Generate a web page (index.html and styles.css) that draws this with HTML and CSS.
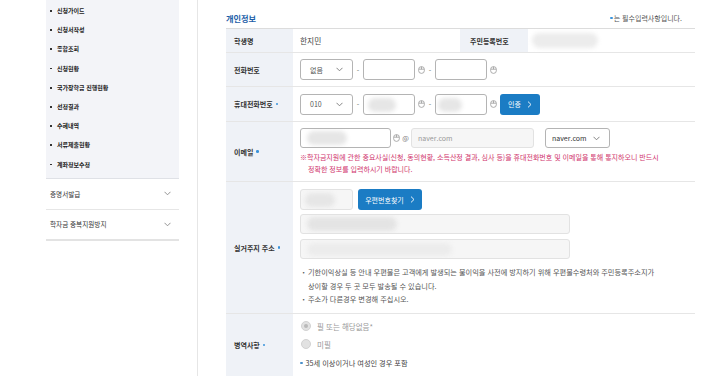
FILE: index.html
```html
<!DOCTYPE html>
<html lang="ko">
<head>
<meta charset="utf-8">
<title>개인정보</title>
<link rel="stylesheet" href="styles.css">
</head>
<body>
<div class="page">
  <aside class="side">
    <div class="side-panel">
      <ul class="sub-menu">
        <li>신청가이드</li>
        <li>신청서작성</li>
        <li>종합조회</li>
        <li>신청현황</li>
        <li>국가장학금 진행현황</li>
        <li>선정결과</li>
        <li>수혜내역</li>
        <li>서류제출현황</li>
        <li>계좌정보수정</li>
      </ul>
    </div>
    <div class="acc">증명서발급<svg class="acc-chev" width="7" height="5" viewBox="0 0 7 5"><polyline points="0.5,0.8 3.5,3.8 6.5,0.8" fill="none" stroke="#888" stroke-width="0.9"/></svg></div>
    <div class="acc acc-last">학자금 중복지원방지<svg class="acc-chev" width="7" height="5" viewBox="0 0 7 5"><polyline points="0.5,0.8 3.5,3.8 6.5,0.8" fill="none" stroke="#888" stroke-width="0.9"/></svg></div>
  </aside>

  <main class="main">
    <div class="title-row">
      <h2 class="title">개인정보</h2>
      <p class="req-note"><span class="req-dot"></span>는 필수입력사항입니다.</p>
    </div>

    <div class="form-table">
      <div class="row row-name">
        <div class="th">학생명</div>
        <div class="td td-text">한지민</div>
        <div class="th th-second">주민등록번호</div>
        <div class="td"><span class="blob blob-rrn"></span></div>
      </div>

      <div class="row row-tel">
        <div class="th">전화번호</div>
        <div class="td td-line">
          <div class="field select sel-sm"><span>없음</span><svg width="7" height="5" viewBox="0 0 7 5"><polyline points="0.5,0.8 3.5,3.8 6.5,0.8" fill="none" stroke="#777" stroke-width="0.9"/></svg></div>
          <span class="dash">-</span>
          <div class="field in-tel"></div>
          <svg class="ico-lock" width="7" height="8" viewBox="0 0 7 8"><rect x="0.6" y="0.6" width="5.8" height="6.8" rx="2.9" fill="none" stroke="#999" stroke-width="0.8"/><line x1="0.8" y1="3.2" x2="6.2" y2="3.2" stroke="#999" stroke-width="0.8"/><line x1="3.5" y1="0.8" x2="3.5" y2="3.2" stroke="#999" stroke-width="0.8"/></svg>
          <span class="dash">-</span>
          <div class="field in-tel"></div>
          <svg class="ico-lock" width="7" height="8" viewBox="0 0 7 8"><rect x="0.6" y="0.6" width="5.8" height="6.8" rx="2.9" fill="none" stroke="#999" stroke-width="0.8"/><line x1="0.8" y1="3.2" x2="6.2" y2="3.2" stroke="#999" stroke-width="0.8"/><line x1="3.5" y1="0.8" x2="3.5" y2="3.2" stroke="#999" stroke-width="0.8"/></svg>
        </div>
      </div>

      <div class="row row-mobile">
        <div class="th">휴대전화번호<span class="req-dot req-after"></span></div>
        <div class="td td-line">
          <div class="field select sel-sm"><span>010</span><svg width="7" height="5" viewBox="0 0 7 5"><polyline points="0.5,0.8 3.5,3.8 6.5,0.8" fill="none" stroke="#777" stroke-width="0.9"/></svg></div>
          <span class="dash">-</span>
          <div class="field in-tel"><span class="blob blob-tel1"></span></div>
          <svg class="ico-lock" width="7" height="8" viewBox="0 0 7 8"><rect x="0.6" y="0.6" width="5.8" height="6.8" rx="2.9" fill="none" stroke="#999" stroke-width="0.8"/><line x1="0.8" y1="3.2" x2="6.2" y2="3.2" stroke="#999" stroke-width="0.8"/><line x1="3.5" y1="0.8" x2="3.5" y2="3.2" stroke="#999" stroke-width="0.8"/></svg>
          <span class="dash">-</span>
          <div class="field in-tel"><span class="blob blob-tel2"></span></div>
          <svg class="ico-lock" width="7" height="8" viewBox="0 0 7 8"><rect x="0.6" y="0.6" width="5.8" height="6.8" rx="2.9" fill="none" stroke="#999" stroke-width="0.8"/><line x1="0.8" y1="3.2" x2="6.2" y2="3.2" stroke="#999" stroke-width="0.8"/><line x1="3.5" y1="0.8" x2="3.5" y2="3.2" stroke="#999" stroke-width="0.8"/></svg>
          <button class="btn btn-auth">인증<svg width="5" height="7" viewBox="0 0 5 7"><polyline points="1,0.6 4,3.5 1,6.4" fill="none" stroke="#fff" stroke-width="0.9"/></svg></button>
        </div>
      </div>

      <div class="row row-email">
        <div class="th">이메일<span class="req-dot req-after"></span></div>
        <div class="td td-col">
          <div class="line">
            <div class="field in-mail"><span class="blob blob-mail"></span></div>
            <svg class="ico-lock ico-mail" width="7" height="8" viewBox="0 0 7 8"><rect x="0.6" y="0.6" width="5.8" height="6.8" rx="2.9" fill="none" stroke="#999" stroke-width="0.8"/><line x1="0.8" y1="3.2" x2="6.2" y2="3.2" stroke="#999" stroke-width="0.8"/><line x1="3.5" y1="0.8" x2="3.5" y2="3.2" stroke="#999" stroke-width="0.8"/></svg>
            <span class="at">@</span>
            <div class="field field-disabled in-domain">naver.com</div>
            <div class="field select sel-domain"><span>naver.com</span><svg width="7" height="5" viewBox="0 0 7 5"><polyline points="0.5,0.8 3.5,3.8 6.5,0.8" fill="none" stroke="#777" stroke-width="0.9"/></svg></div>
          </div>
          <p class="warn">※학자금지원에 관한 중요사실(신청, 동의현황, 소득산정 결과, 심사 등)을 휴대전화번호 및 이메일을 통해 통지하오니 반드시<br><span class="warn-indent">정확한 정보를 입력하시기 바랍니다.</span></p>
        </div>
      </div>

      <div class="row row-addr">
        <div class="th">실거주지 주소<span class="req-dot req-after"></span></div>
        <div class="td td-col">
          <div class="line">
            <div class="field field-disabled in-post"><span class="blob blob-post"></span></div>
            <button class="btn btn-post">우편번호찾기<svg width="5" height="7" viewBox="0 0 5 7"><polyline points="1,0.6 4,3.5 1,6.4" fill="none" stroke="#fff" stroke-width="0.9"/></svg></button>
          </div>
          <div class="field field-disabled in-addr in-addr1"><span class="blob blob-addr1"></span></div>
          <div class="field field-disabled in-addr in-addr2"><span class="blob blob-addr2"></span></div>
          <ul class="notes">
            <li>기한이익상실 등 안내 우편물은 고객에게 발생되는 불이익을 사전에 방지하기 위해 우편물수령처와 주민등록주소지가<br>상이할 경우 두 곳 모두 발송될 수 있습니다.</li>
            <li>주소가 다른경우 변경해 주십시오.</li>
          </ul>
        </div>
      </div>

      <div class="row row-mil">
        <div class="th">병역사항<span class="req-dot req-after"></span></div>
        <div class="td td-col td-mil">
          <label class="radio-line"><span class="radio radio-on"></span>필 또는 해당없음*</label>
          <label class="radio-line"><span class="radio"></span>미필</label>
          <p class="mil-note"><span class="req-dot mil-dot"></span>35세 이상이거나 여성인 경우 포함</p>
        </div>
      </div>
    </div>
  </main>
</div>
</body>
</html>
```

FILE: styles.css
```css
* { box-sizing: border-box; }
html, body { margin: 0; padding: 0; background: #fff; }
body {
  font-family: "Noto Sans CJK KR", "Noto Sans", sans-serif;
  color: #333;
  width: 720px;
  height: 376px;
  overflow: hidden;
}
p, ul, h2 { margin: 0; padding: 0; }
ul { list-style: none; }

.page { display: flex; height: 376px; }

/* sidebar */
.side {
  width: 198px;
  flex: none;
  padding: 0 18px 0 46px;
  border-right: 1px solid #e6e6e6;
}
.side-panel {
  background: #f3f4f8;
  border-bottom: 1px solid #dfe1e6;
  padding: 1px 0 4px;
}
.sub-menu li {
  height: 19.2px;
  line-height: 19.2px;
  font-size: 6px;
  font-weight: 700;
  color: #222;
  padding-left: 11px;
  position: relative;
}
.sub-menu li::before {
  content: "";
  position: absolute;
  left: 4px;
  top: 9px;
  width: 1.8px;
  height: 1.8px;
  background: #333;
}
.acc {
  height: 31px;
  display: flex;
  align-items: center;
  justify-content: space-between;
  padding: 0 8px 0 4px;
  font-size: 6.6px;
  color: #333;
  border-bottom: 1px solid #e6e6e6;
}
.acc-last { border-bottom: 2px solid #e3e3e3; }

/* main */
.main { width: 497px; padding-left: 28px; }
.title-row {
  height: 28px;
  display: flex;
  align-items: flex-end;
  justify-content: space-between;
  padding: 0 13px 3px 0;
}
.title { font-size: 8.2px; font-weight: 700; color: #1d5ea8; line-height: 14px; }
.req-note { font-size: 7px; color: #555; line-height: 14px; display: flex; align-items: center; }
.req-dot {
  display: inline-block;
  width: 2.6px;
  height: 2.6px;
  border-radius: 50%;
  background: #3a93db;
  margin-right: 1px;
  flex: none;
}
.req-after { margin-left: 3px; margin-right: 0; }

.form-table { width: 469px; border-top: 1px solid #dcdcdc; }
.row {
  display: grid;
  grid-template-columns: 67px 1fr;
  border-bottom: 1px solid #e6e6e6;
}
.row-name { grid-template-columns: 67px 167px 68px 1fr; height: 24px; }
.row-tel { height: 34px; }
.row-mobile { height: 35px; }
.row-email { height: 60px; }
.row-addr { height: 132px; }
.row-mil { height: 62px; border-bottom: none; }

.th {
  background: #eff2f7;
  display: flex;
  align-items: center;
  padding-left: 8px;
  font-size: 7px;
  font-weight: 700;
  color: #333;
  white-space: nowrap;
}
.th-second { padding-left: 10px; }
.td { padding-left: 7px; display: flex; align-items: center; position: relative; }
.td-text { font-size: 7.7px; color: #444; }
.td-line { gap: 0; }
.td-col { flex-direction: column; align-items: flex-start; }

.field {
  height: 21px;
  border: 1px solid #b4b4b4;
  border-radius: 3px;
  background: #fff;
  position: relative;
  overflow: hidden;
  flex: none;
}
.field-disabled { background: #f6f6f6; border-color: #e2e2e2; }
.select {
  display: flex;
  align-items: center;
  justify-content: space-between;
  padding: 0 9px 0 9px;
  font-size: 7px;
  color: #555;
}
.sel-sm { width: 53px; }
.dash { width: 10px; text-align: center; font-size: 7px; color: #666; }
.in-tel { width: 52px; }
.ico-lock { margin-left: 3px; flex: none; }
.btn {
  height: 21px;
  border: none;
  border-radius: 3px;
  background: #1b7cc4;
  color: #fff;
  font-family: inherit;
  font-size: 7px;
  display: flex;
  align-items: center;
  justify-content: center;
  gap: 6px;
  padding: 0;
  flex: none;
}
.btn-auth { width: 40px; margin-left: 3px; }

.row-email .td-col { padding-top: 6px; }
.line { display: flex; align-items: center; }
.in-mail { width: 91px; height: 20px; }
.ico-mail { margin-left: 2px; }
.at { width: 11px; text-align: center; font-size: 7px; color: #777; }
.in-domain {
  width: 123px; height: 20px;
  font-size: 7px; color: #999;
  display: flex; align-items: center; padding-left: 6px;
}
.sel-domain { width: 65px; height: 20px; margin-left: 11px; padding: 0 9px 0 6px; color: #333; }
.warn { margin-top: 3px; font-size: 7px; line-height: 12px; color: #d0346c; white-space: nowrap; }
.warn-indent { padding-left: 8px; }

.row-addr .td-col { padding-top: 7px; }
.in-post { width: 53px; }
.btn-post { width: 64px; margin-left: 5px; }
.in-addr { width: 270px; height: 20px; }
.in-addr1 { margin-top: 4px; }
.in-addr2 { margin-top: 5px; }
.notes { margin-top: 7px; font-size: 7.2px; line-height: 13.5px; color: #555; }
.notes li { position: relative; padding-left: 8px; white-space: nowrap; }
.notes li::before { content: "・"; position: absolute; left: 0; top: 0; width: 8px; }

.td-mil { padding-top: 3px; }
.radio-line { display: flex; align-items: center; height: 18px; font-size: 7.5px; color: #999; }
.radio {
  width: 10px; height: 10px; border-radius: 50%;
  background: #e2e2e2; border: 1px solid #d2d2d2;
  margin: 0 6px 0 1px; position: relative; flex: none;
}
.radio-on::after {
  content: ""; position: absolute; left: 2px; top: 2px;
  width: 4px; height: 4px; border-radius: 50%; background: #b9b9b9;
}
.mil-note { margin-top: 3px; font-size: 7.2px; line-height: 14px; color: #444; display: flex; align-items: center; }
.mil-dot { margin-right: 3px; background: #4a8fc9; }

/* privacy masks */
.blob {
  position: absolute;
  background: #e6e6e6;
  border-radius: 8px;
  filter: blur(2px);
}
.blob-rrn { left: 4px; top: 4px; width: 66px; height: 15px; background: #ececec; }
.blob-tel1 { left: 4px; top: 3px; width: 28px; height: 14px; }
.blob-tel2 { left: 2px; top: 3px; width: 24px; height: 14px; }
.blob-mail { left: 6px; top: 2px; width: 40px; height: 14px; }
.blob-post { left: 4px; top: 3px; width: 30px; height: 14px; }
.blob-addr1 { left: 6px; top: 2px; width: 90px; height: 14px; background: #e4e4e4; }
.blob-addr2 { left: 6px; top: 3px; width: 145px; height: 13px; background: #ececec; }
```
